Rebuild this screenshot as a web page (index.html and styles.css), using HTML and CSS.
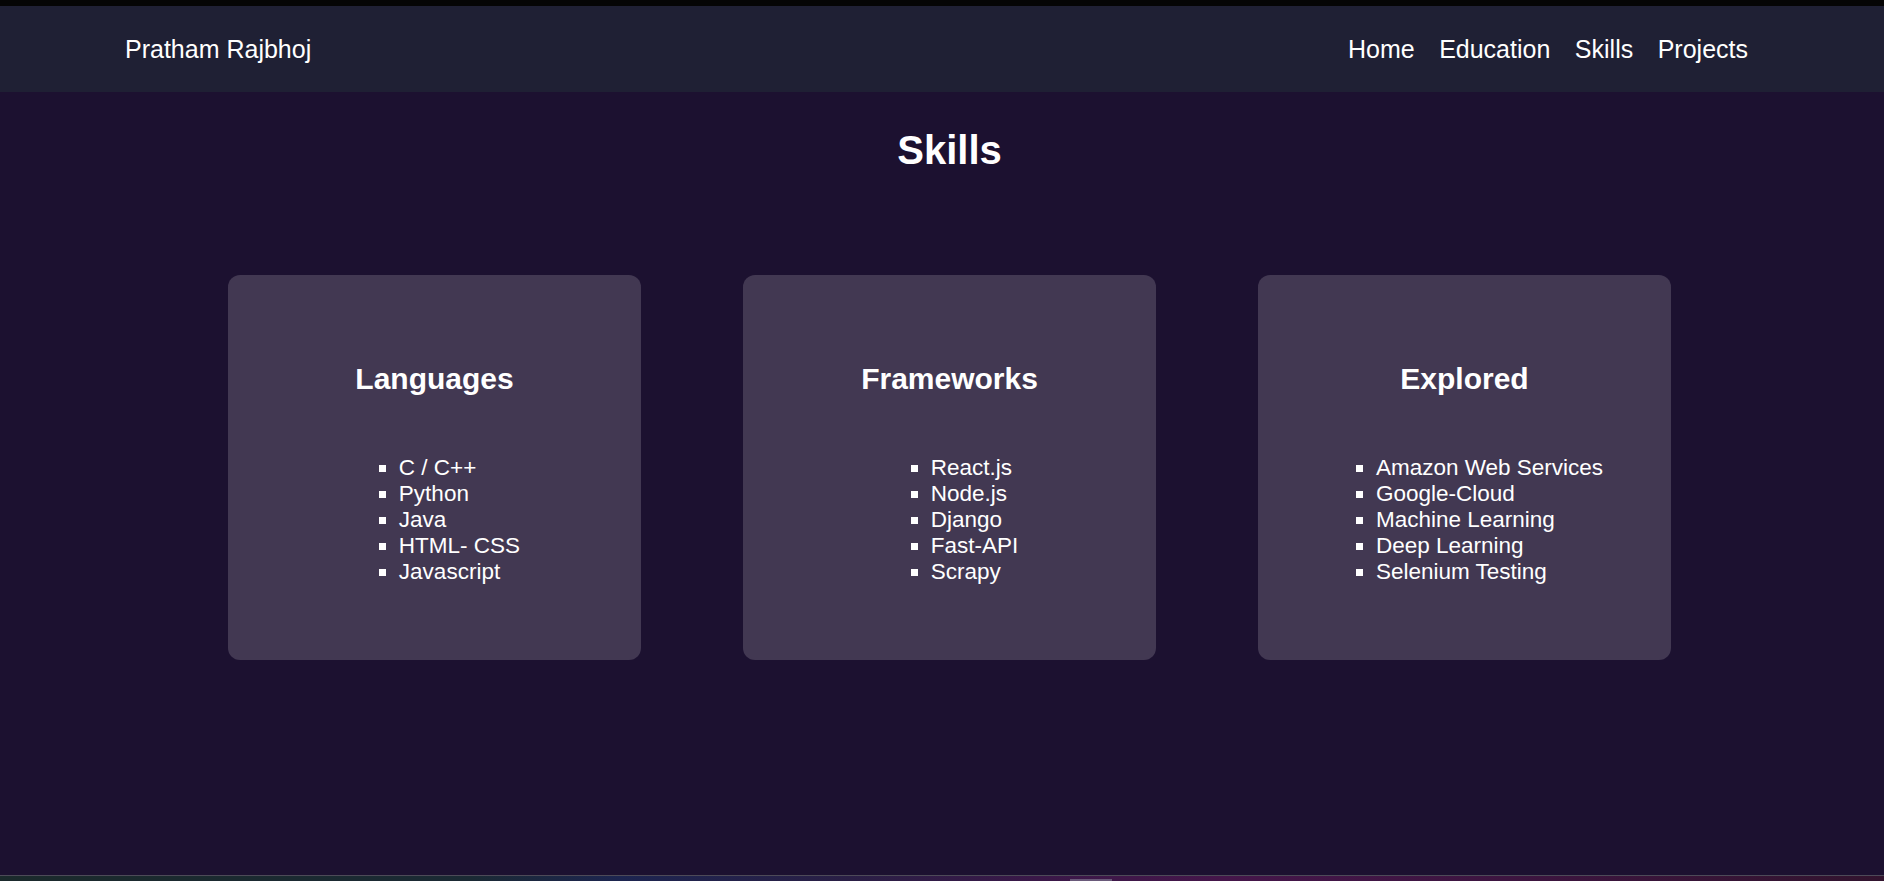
FILE: index.html
```html
<!DOCTYPE html>
<html lang="en">
<head>
<meta charset="utf-8">
<title>Pratham Rajbhoj</title>
<link rel="stylesheet" href="styles.css">
</head>
<body>
<div class="topstrip"></div>
<header class="navbar">
  <a class="brand" href="#">Pratham Rajbhoj</a>
  <nav class="links">
    <a href="#">Home</a>
    <a href="#">Education</a>
    <a href="#">Skills</a>
    <a href="#">Projects</a>
  </nav>
</header>
<main class="main">
  <h1 class="title">Skills</h1>
  <div class="cards">
    <section class="card">
      <h2 class="card-title">Languages</h2>
      <ul class="card-list">
        <li>C / C++</li>
        <li>Python</li>
        <li>Java</li>
        <li>HTML- CSS</li>
        <li>Javascript</li>
      </ul>
    </section>
    <section class="card">
      <h2 class="card-title">Frameworks</h2>
      <ul class="card-list">
        <li>React.js</li>
        <li>Node.js</li>
        <li>Django</li>
        <li>Fast-API</li>
        <li>Scrapy</li>
      </ul>
    </section>
    <section class="card">
      <h2 class="card-title">Explored</h2>
      <ul class="card-list">
        <li>Amazon Web Services</li>
        <li>Google-Cloud</li>
        <li>Machine Learning</li>
        <li>Deep Learning</li>
        <li>Selenium Testing</li>
      </ul>
    </section>
  </div>
</main>
<div class="bottomline"></div>
<div class="bottomstrip"><span class="indicator"></span></div>
</body>
</html>
```
FILE: styles.css
```css
html, body {
  margin: 0;
  padding: 0;
  background: #1c1130;
  font-family: "Liberation Sans", Arial, sans-serif;
  color: #ffffff;
  height: 881px;
  overflow: hidden;
}

.topstrip {
  height: 6px;
  background: #050505;
}

.navbar {
  height: 86px;
  background: #1f2034;
  display: flex;
  align-items: center;
  justify-content: space-between;
  padding: 0 136px 0 125px;
}

.brand {
  color: #ffffff;
  text-decoration: none;
  font-size: 25px;
}

.links {
  display: flex;
  gap: 24.5px;
}

.links a {
  color: #ffffff;
  text-decoration: none;
  font-size: 25px;
}

.main {
  height: 783px;
  background: #1c1130;
  overflow: hidden;
}

.title {
  margin: 35px 0 0;
  padding-left: 15px;
  text-align: center;
  font-size: 40px;
  line-height: 46px;
  font-weight: bold;
}

.cards {
  display: flex;
  gap: 102px;
  padding-left: 228px;
  margin-top: 102px;
}

.card {
  width: 413px;
  height: 385px;
  box-sizing: border-box;
  background: #423852;
  border-radius: 12px;
  padding-top: 86px;
  display: flex;
  flex-direction: column;
  align-items: center;
}

.card-title {
  margin: 0 0 59px;
  font-size: 30px;
  line-height: 35px;
  font-weight: bold;
}

.card-list {
  margin: 0;
  padding-left: 50px;
  list-style: square;
  font-size: 22.5px;
  line-height: 26px;
}

.bottomline {
  height: 1px;
  background: #4d4a58;
}

.bottomstrip {
  height: 5px;
  position: relative;
  background: linear-gradient(90deg, #1b2a2c 0%, #1b2a34 25%, #1d2550 33%, #2a1f45 45%, #3a1848 55%, #45164a 65%, #3d1540 80%, #32142e 100%);
}

.indicator {
  position: absolute;
  left: 1070px;
  bottom: 0;
  width: 42px;
  height: 2px;
  background: #6a5a7a;
}
```
